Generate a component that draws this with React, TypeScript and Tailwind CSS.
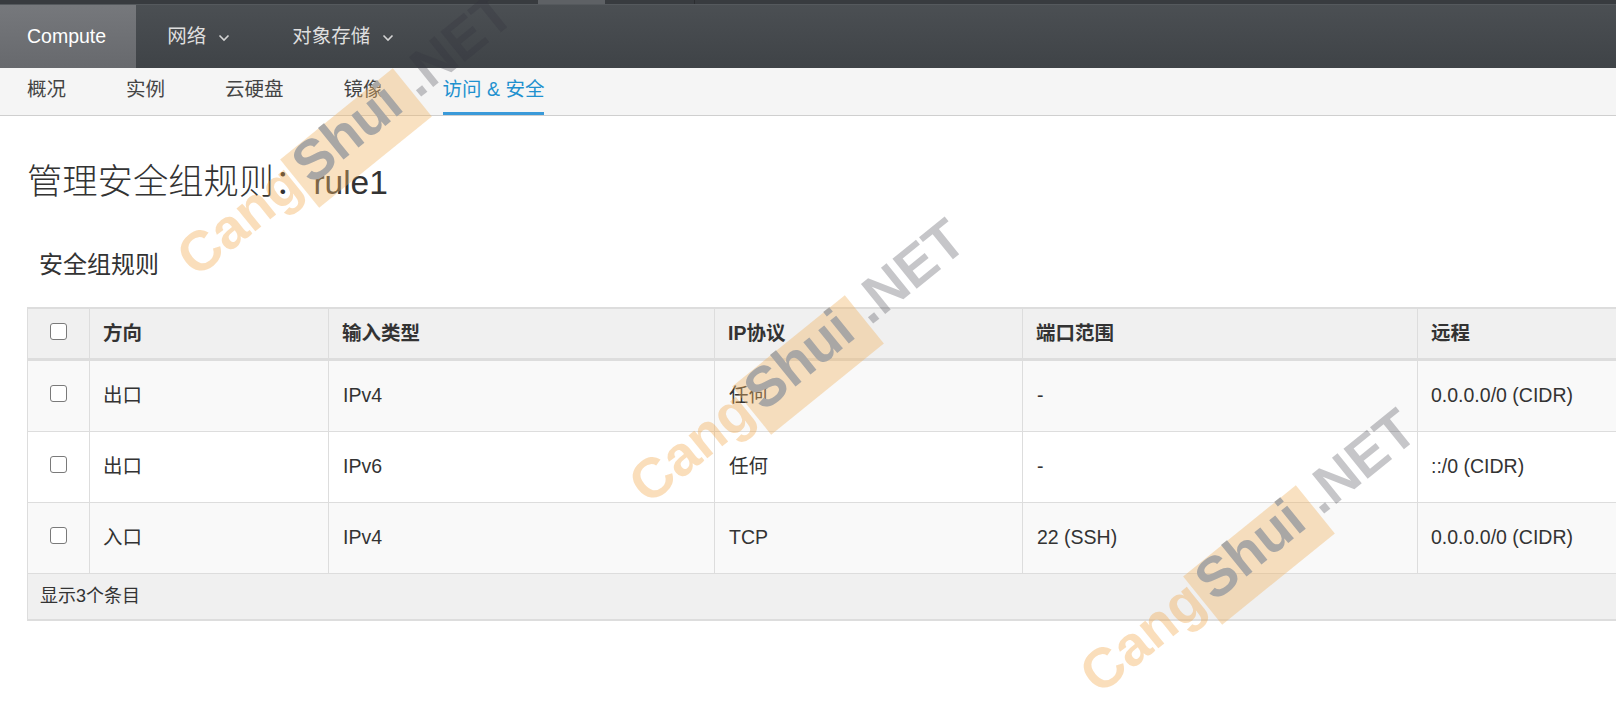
import React from 'react';

const cols = 'grid grid-cols-[62px_239px_386px_308px_395px_1fr]';

const rules = [
  { dir: '出口', type: 'IPv4', proto: '任何', port: '-', remote: '0.0.0.0/0 (CIDR)' },
  { dir: '出口', type: 'IPv6', proto: '任何', port: '-', remote: '::/0 (CIDR)' },
  { dir: '入口', type: 'IPv4', proto: 'TCP', port: '22 (SSH)', remote: '0.0.0.0/0 (CIDR)' },
];

function Chevron() {
  return (
    <svg width="12" height="8" viewBox="0 0 12 8" className="ml-[12px] mt-[2px]">
      <polyline points="1.5,1.5 6,6 10.5,1.5" fill="none" stroke="#d4d4d4" strokeWidth="1.6" />
    </svg>
  );
}

function Box() {
  return <span className="block w-[17px] h-[17px] mb-[5px] rounded-[3px] border-[1.5px] border-[#7a7a7a] bg-white" />;
}

function Watermark({ pos }: { pos: string }) {
  return (
    <div
      className={`absolute ${pos} -translate-x-1/2 -translate-y-1/2 -rotate-[39deg] whitespace-nowrap text-[56px] font-bold leading-none font-['Liberation_Sans',sans-serif]`}
    >
      <span className="text-[rgba(240,160,60,0.35)]">Cang</span>
      <span className="inline-block pl-[8px] pr-[16px] leading-[62px] translate-y-[10px] bg-[rgba(240,180,100,0.4)] text-[#a9a7a5]">
        <span className="inline-block -translate-y-[10px]">Shui</span>
      </span>
      <span className="text-[rgba(50,50,60,0.28)]">.NET</span>
    </div>
  );
}

export default function App() {
  const sub = ['概况', '实例', '云硬盘', '镜像'];

  return (
    <div className="relative min-h-screen overflow-hidden bg-white text-[#333] font-['Liberation_Sans','Noto_Sans_CJK_SC',sans-serif]">
      {/* top strip */}
      <div className="h-[4px] bg-[#383b3f] flex">
        <div className="ml-[538px] w-[67px] bg-[#5e6165]" />
        <div className="ml-[89px] w-[1px] bg-[#2c2e31]" />
      </div>

      {/* main nav */}
      <div className="h-[64px] flex bg-linear-to-b from-[#4b4f53] to-[#3f4347] border-t border-[#55595d]">
        <div className="h-full flex items-center pl-[27px] pr-[30px] bg-linear-to-b from-[#76787c] to-[#67696d] text-white text-[19.5px]">
          Compute
        </div>
        <div className="h-full flex items-center px-[31px] text-[#dedede] text-[19.5px]">
          网络
          <Chevron />
        </div>
        <div className="h-full flex items-center px-[31px] text-[#dedede] text-[19.5px]">
          对象存储
          <Chevron />
        </div>
      </div>

      {/* sub nav */}
      <div className="h-[48px] flex gap-[60px] pl-[27px] bg-[#f5f5f5] border-b border-[#cfcfcf] text-[19.5px]">
        {sub.map((s) => (
          <div key={s} className="flex items-center border-b-[3px] border-transparent text-[#444]">
            {s}
          </div>
        ))}
        <div className="flex items-center border-b-[3px] border-[#3a9ad9] text-[#1f91cf]">访问 &amp; 安全</div>
      </div>

      <h1 className="mt-[47px] h-[37px] leading-[37px] pl-[27px] text-[35.3px] font-light text-[#333] whitespace-nowrap">
        管理安全组规则：<span className="ml-[4px] text-[33.5px] font-normal">rule1</span>
      </h1>

      <h3 className="mt-[52px] h-[26px] leading-[26px] pl-[39px] text-[24px] text-[#333]">安全组规则</h3>

      {/* table */}
      <div className="mt-[29px] ml-[27px] border-l border-t-2 border-[#ddd] text-[19.5px]">
        <div className={`${cols} h-[52px] bg-[#f0f0f0] border-b-[3px] border-[#ddd] font-bold`}>
          <div className="flex items-center justify-center border-r border-[#ddd]">
            <Box />
          </div>
          <div className="flex items-center pl-[13px] border-r border-[#ddd]">方向</div>
          <div className="flex items-center pl-[13px] border-r border-[#ddd]">输入类型</div>
          <div className="flex items-center pl-[13px] border-r border-[#ddd]">IP协议</div>
          <div className="flex items-center pl-[13px] border-r border-[#ddd]">端口范围</div>
          <div className="flex items-center pl-[13px]">远程</div>
        </div>

        {rules.map((r, i) => (
          <div key={i} className={`${cols} h-[71px] border-b border-[#ddd] ${i % 2 === 0 ? 'bg-[#f9f9f9]' : 'bg-white'}`}>
            <div className="flex items-center justify-center border-r border-[#ddd]">
              <Box />
            </div>
            <div className="flex items-center pl-[13px] border-r border-[#ddd]">{r.dir}</div>
            <div className="flex items-center pl-[14px] border-r border-[#ddd]">{r.type}</div>
            <div className="flex items-center pl-[14px] border-r border-[#ddd]">{r.proto}</div>
            <div className="flex items-center pl-[14px] border-r border-[#ddd]">{r.port}</div>
            <div className="flex items-center pl-[13px]">{r.remote}</div>
          </div>
        ))}

        <div className="h-[47px] flex items-center pl-[12px] bg-[#f0f0f0] border-b-2 border-[#ddd] text-[18px]">
          显示3个条目
        </div>
      </div>

      {/* watermark overlay */}
      <div className="pointer-events-none absolute inset-0">
        <Watermark pos="left-[345px] top-[134px]" />
        <Watermark pos="left-[797px] top-[361px]" />
        <Watermark pos="left-[1248px] top-[551px]" />
      </div>
    </div>
  );
}
